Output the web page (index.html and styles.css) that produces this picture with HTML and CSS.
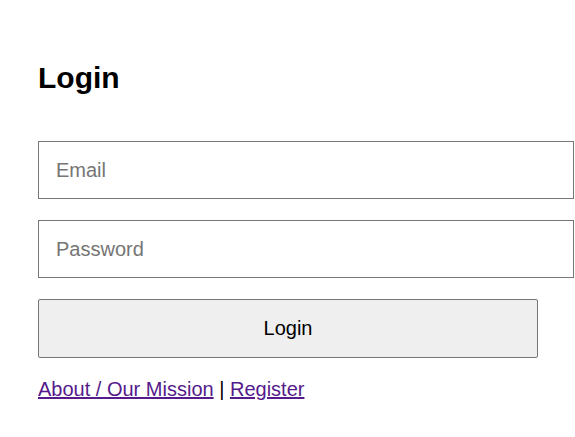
FILE: index.html
```html
<!DOCTYPE html>
<html lang="en">
<head>
<meta charset="utf-8">
<title>Login</title>
<link rel="stylesheet" href="styles.css">
</head>
<body>
<main class="page">
  <h1 class="title">Login</h1>
  <form class="form">
    <input class="field" type="email" placeholder="Email">
    <input class="field" type="password" placeholder="Password">
    <button class="btn" type="button">Login</button>
  </form>
  <p class="links"><a class="link" href="#">About / Our Mission</a> | <a class="link" href="#">Register</a></p>
</main>
</body>
</html>
```

FILE: styles.css
```css
html, body {
  margin: 0;
  padding: 0;
  background: #ffffff;
}
.page {
  padding: 61px 0 0 38px;
  font-family: "Liberation Sans", Arial, sans-serif;
  font-size: 20px;
  color: #000;
}
.title {
  margin: 0 0 46px 0;
  font-size: 30px;
  font-weight: bold;
  line-height: 34px;
}
.form {
  display: flex;
  flex-direction: column;
  gap: 21px;
  margin: 0;
}
.field {
  box-sizing: border-box;
  width: 536px;
  height: 58px;
  padding: 0 17px;
  margin: 0;
  border: 1px solid #767676;
  border-radius: 0;
  font-family: "Liberation Sans", Arial, sans-serif;
  font-size: 20px;
  color: #000;
  background: #fff;
  outline: none;
}
.field::placeholder {
  color: #757575;
}
.btn {
  box-sizing: border-box;
  width: 500px;
  height: 59px;
  margin: 0;
  border: 1px solid #767676;
  border-radius: 2px;
  background: #efefef;
  font-family: "Liberation Sans", Arial, sans-serif;
  font-size: 20px;
  color: #000;
}
.links {
  margin: 20px 0 0 0;
  line-height: 23px;
}
.link {
  color: #551a8b;
}
```
